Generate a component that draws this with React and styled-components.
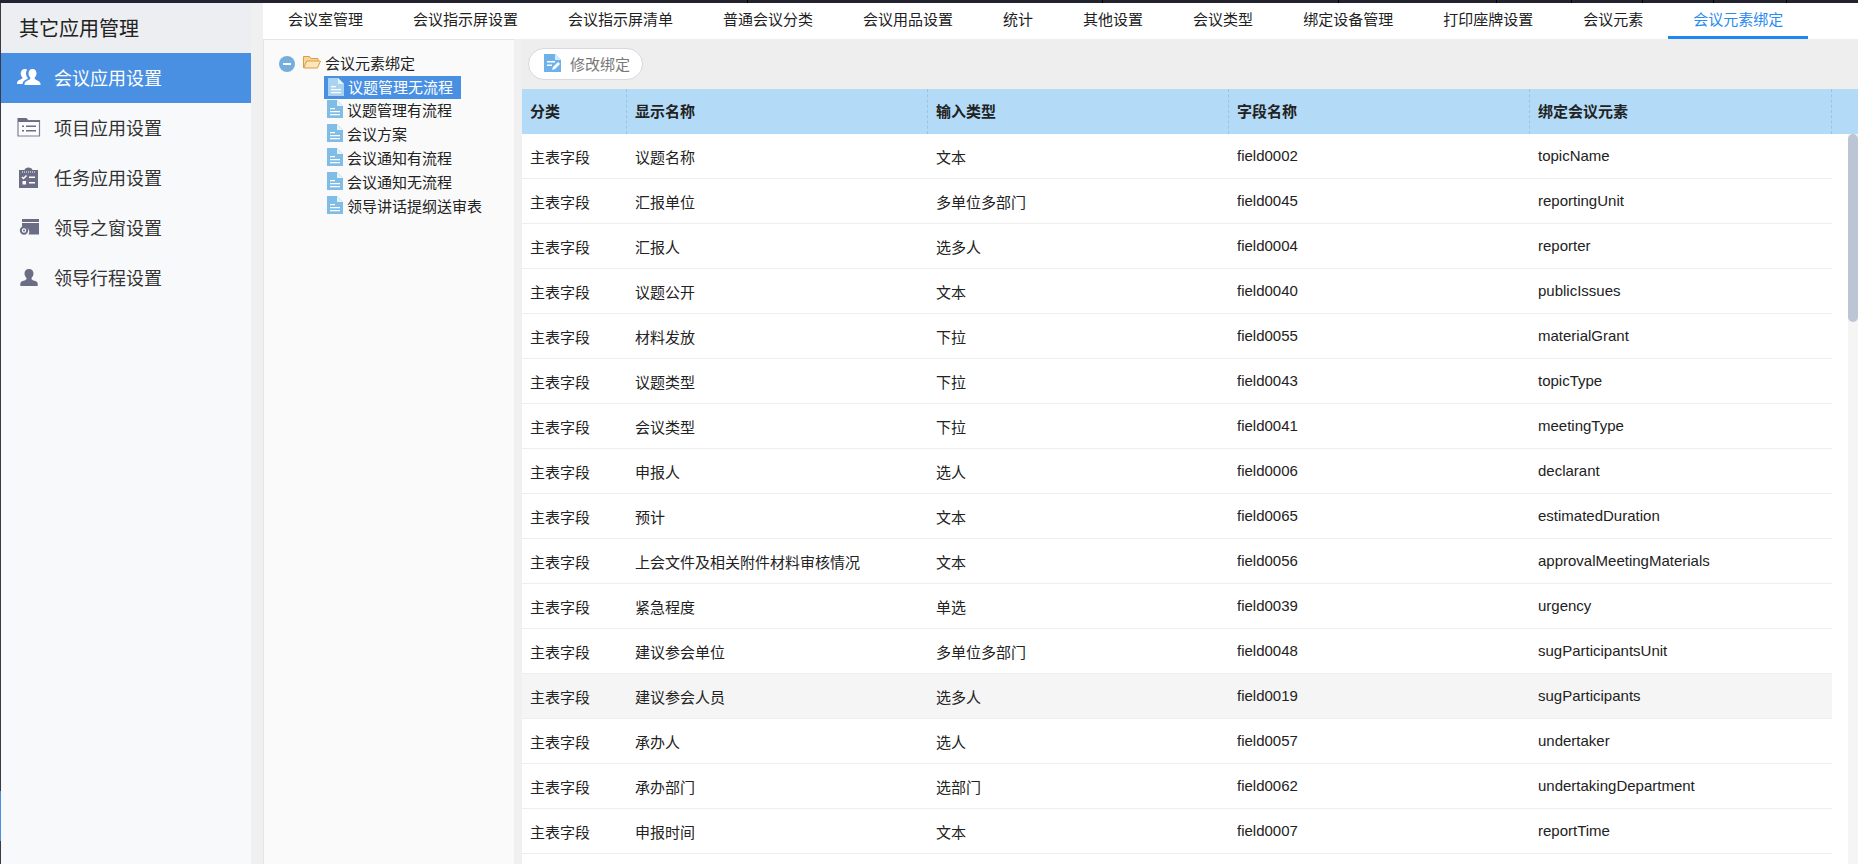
import React from 'react';
import styled, { createGlobalStyle } from 'styled-components';

const GlobalStyle = createGlobalStyle`
  html, body { margin: 0; padding: 0; height: 100%; overflow: hidden; }
  body {
    font-family: "Liberation Sans", "Noto Sans CJK SC", sans-serif;
    font-size: 15px;
    color: #222;
  }
  * { box-sizing: border-box; }
`;

const Page = styled.div`
  height: 100vh;
  display: flex;
  flex-direction: column;
  background: #f0f0f0;
  overflow: hidden;
`;

const TopStrip = styled.div`
  height: 3px;
  flex: none;
  display: flex;
  background: #23232f;
`;

const StripPart = styled.span`
  width: ${p => p.$w}px;
  border-right: 1px solid #000;
`;

const Body = styled.div`
  flex: 1;
  display: flex;
  min-height: 0;
`;

const LeftEdge = styled.div`
  width: 1px;
  flex: none;
  display: flex;
  flex-direction: column;
  background: #3a3a44;
`;

const EdgeMark = styled.span`
  height: 50px;
  margin-top: 788px;
  background: #4a90e2;
`;

const Sidebar = styled.aside`
  width: 250px;
  flex: none;
  margin-right: 12px;
  background: #f8f9fb;
`;

const SideTitle = styled.div`
  height: 50px;
  padding: 0 0 2px 18px;
  display: flex;
  align-items: center;
  font-size: 20px;
  color: #222;
  background: #eceef1;
`;

const SideItem = styled.div`
  height: 50px;
  padding-bottom: 2px;
  display: flex;
  align-items: center;
  font-size: 18px;
  color: ${p => (p.$active ? '#fff' : '#333')};
  background: ${p => (p.$active ? '#4a90e2' : 'transparent')};
`;

const SideIcon = styled.span`
  width: 53px;
  flex: none;
  display: flex;
  justify-content: center;
  padding-left: 2px;
  color: ${p => (p.$active ? '#fff' : '#6b6d84')};
`;

const Main = styled.div`
  flex: 1;
  min-width: 0;
  display: flex;
  flex-direction: column;
`;

const Tabs = styled.nav`
  height: 36px;
  flex: none;
  display: flex;
  background: #fff;
`;

const Tab = styled.div`
  height: 36px;
  padding: 0 25px 3px;
  display: flex;
  align-items: center;
  font-size: 15px;
  white-space: nowrap;
  color: ${p => (p.$active ? '#2a8cf0' : '#222')};
  border-bottom: 3px solid ${p => (p.$active ? '#1e88f0' : 'transparent')};
`;

const Work = styled.div`
  flex: 1;
  min-height: 0;
  display: flex;
`;

const TreePanel = styled.div`
  width: 251px;
  flex: none;
  padding: 11px 0 0 15px;
  background: #fafafa;
  border-left: 1px solid #e4e4e4;
  border-top: 1px solid #e6e6e6;
`;

const TreeRoot = styled.div`
  height: 24px;
  padding-bottom: 2px;
  display: flex;
  align-items: center;
  font-size: 15px;
`;

const TreeToggle = styled.span`
  width: 16px;
  height: 16px;
  margin: 3px 8px 0 0;
  border-radius: 50%;
  display: flex;
  align-items: center;
  justify-content: center;
  background: #74aedd;
  &::before {
    content: '';
    width: 8px;
    height: 2px;
    background: #fff;
  }
`;

const TreeList = styled.div`
  margin: 1px 0 0 45px;
`;

const TreeRow = styled.div`
  width: ${p => (p.$selected ? '137px' : 'auto')};
  height: ${p => (p.$selected ? '23px' : '24px')};
  display: flex;
  align-items: center;
  gap: 4px;
  padding-left: ${p => (p.$selected ? '4px' : '3px')};
  padding-bottom: 2px;
  margin-bottom: ${p => (p.$selected ? '-1px' : '0')};
  font-size: 15px;
  white-space: nowrap;
  color: ${p => (p.$selected ? '#fff' : '#222')};
  background: ${p => (p.$selected ? '#4a90e2' : 'transparent')};
`;

const Content = styled.div`
  flex: 1;
  min-width: 0;
  margin-left: 8px;
  display: flex;
  flex-direction: column;
`;

const Toolbar = styled.div`
  height: 50px;
  flex: none;
  padding: 9px 0 0 6px;
  background: #eee;
`;

const ToolButton = styled.button`
  width: 115px;
  height: 32px;
  padding: 0 0 2px 15px;
  display: flex;
  align-items: center;
  gap: 9px;
  font: inherit;
  color: #777;
  background: #fff;
  border: 1px solid #d8d8de;
  border-radius: 16px;
`;

const Grid = styled.div`
  display: grid;
  grid-template-columns: 105px 301px 301px 301px 302px;
`;

const HeadRow = styled(Grid)`
  height: 45px;
  flex: none;
  grid-template-columns: 105px 301px 301px 301px 302px 1fr;
  background: #b3dbf8;
`;

const HeadCell = styled.div`
  padding: 0 0 2px 8px;
  display: flex;
  align-items: center;
  font-weight: bold;
  border-right: 1px dashed #9cc3e2;
`;

const TableBody = styled.div`
  flex: 1;
  min-height: 0;
  display: flex;
  background: #fff;
`;

const Rows = styled.div`
  width: 1310px;
  flex: none;
  overflow: hidden;
`;

const Row = styled(Grid)`
  height: 45px;
  background: ${p => (p.$hover ? '#f5f5f5' : '#fff')};
  border-bottom: 1px solid #eee;
`;

const Cell = styled.div`
  padding: 0 0 ${p => (p.$latin ? '2px' : '0')} 8px;
  display: flex;
  align-items: center;
  white-space: nowrap;
  color: #222;
`;

const ScrollTrack = styled.div`
  width: 10px;
  margin-left: 16px;
  flex: none;
  background: #f5f5f5;
`;

const ScrollThumb = styled.div`
  height: 188px;
  border-radius: 5px;
  background: #bcc5d3;
`;

const PeopleIcon = () => (
  <svg width="24" height="18" viewBox="0 0 24 18" fill="currentColor">
    <path d="M15.5 1c2.6 0 4 2 4 4.300 0 1.700-.8 3.300-1.800 4.200v1.300c0 .7 2.300 1.400 4 2.400 1 .6 1.800 1.500 1.800 2.800v1H7.500v-1c0-1.300.8-2.200 1.800-2.800 1.700-1 4-1.700 4-2.400V9.500c-1-.9-1.800-2.500-1.800-4.200C11.500 3 12.900 1 15.500 1z" />
    <path d="M8 1c.9 0 1.700.3 2.300.7-.9 1-1.300 2.300-1.300 3.700 0 1.700.7 3.400 1.800 4.500v.8c-1 .6-2.300 1.100-3.300 1.800-1.100.8-1.900 2-2 3.500H0v-1c0-1.300.8-2.200 1.800-2.800 1.400-.8 3-1.400 3.600-2V9.400C4.400 8.500 3.700 7 3.700 5.300 3.700 3 5.400 1 8 1z" />
  </svg>
);

const ListIcon = () => (
  <svg width="24" height="20" viewBox="0 0 24 20">
    <path d="M1 1.500h8l2 2h11.500v15.500H1z" fill="#fdfdfe" stroke="#7d7f96" strokeWidth="1.200" />
    <path d="M1 1h8l2 2.500h12V5H1z" fill="#6b6d84" />
    <path d="M5 8.500h2v1.600H5zM5 13h2v1.600H5zM9 8.500h10v1.600H9zM9 13h10v1.600H9z" fill="#6b6d84" />
  </svg>
);

const ClipboardIcon = () => (
  <svg width="21" height="21" viewBox="0 0 21 21">
    <path d="M1 3h5.500c.4-1.500 1.900-2.500 4-2.500s3.600 1 4 2.500H20v18H1z" fill="#6b6d84" />
    <path d="M4 5h13" stroke="#fff" strokeWidth="1" strokeDasharray="1 1" />
    <path d="M4 10l1.500 1.500L8.500 8.500" fill="none" stroke="#fff" strokeWidth="1.500" />
    <path d="M11 9.500h6v1.600h-6zM11 15h6v1.600h-6zM4.500 14h3.500v3.500H4.500z" fill="#fff" />
  </svg>
);

const WindowIcon = () => (
  <svg width="20" height="16" viewBox="0 0 20 16">
    <path d="M3 0h17v3H3zM3 4h17v11.500H9.500A5 5 0 0 0 3 8.500z" fill="#6b6d84" />
    <circle cx="5" cy="11.500" r="3.200" fill="none" stroke="#6b6d84" strokeWidth="2" />
    <circle cx="5" cy="11.500" r="1" fill="#6b6d84" />
  </svg>
);

const PersonIcon = () => (
  <svg width="18" height="17" viewBox="0 0 18 17" fill="#6b6d84">
    <path d="M9 0c2.900 0 4.500 2 4.500 4.500 0 1.900-.9 3.500-2 4.400v1c0 .9 2.300 1.400 4 2.200 1.100.5 2.200 1.200 2.200 2.900V17H.3v-2c0-1.700 1.100-2.400 2.200-2.900 1.700-.8 4-1.300 4-2.200v-1c-1.100-.9-2-2.500-2-4.400C4.500 2 6.100 0 9 0z" />
  </svg>
);

const FolderIcon = () => (
  <svg width="18" height="14" viewBox="0 0 18 14" style={{ marginRight: 4 }}>
    <path d="M.5 13V1.500h6l1.500 2h7V6" fill="#f6d79c" stroke="#dd9c3f" />
    <path d="M.7 13l3-7h13.800l-3 7z" fill="#fbe6bd" stroke="#dd9c3f" />
  </svg>
);

const DocIcon = ({ light }) => (
  <svg width="16" height="18" viewBox="0 0 16 18">
    <path d="M0 0h10l6 6v12H0z" fill={light ? '#a9d3ee' : '#7fbce6'} />
    <path d="M10 0l6 6h-6z" fill="#e6f3fb" />
    <path d="M3 8h5v1.200H3zM3 11h10v1.200H3zM3 14h10v1.200H3z" fill="#fff" />
  </svg>
);

const EditIcon = () => (
  <svg width="17" height="18" viewBox="0 0 17 18">
    <path d="M0 0h11l6 6v12H0z" fill="#6db3ea" />
    <path d="M11 0l6 6h-6z" fill="#d6eafa" />
    <path d="M3 7h8v1.400H3zM3 10.500h5v1.400H3z" fill="#fff" />
    <path d="M8 16l1-3 5-5 2 2-5 5z" fill="#fff" />
  </svg>
);

const stripWidths = [748, 355, 236, 158, 75, 71, 71, 73];

const sideItems = [
  { label: '会议应用设置', icon: <PeopleIcon />, active: true },
  { label: '项目应用设置', icon: <ListIcon /> },
  { label: '任务应用设置', icon: <ClipboardIcon /> },
  { label: '领导之窗设置', icon: <WindowIcon /> },
  { label: '领导行程设置', icon: <PersonIcon /> },
];

const tabs = ['会议室管理', '会议指示屏设置', '会议指示屏清单', '普通会议分类', '会议用品设置', '统计', '其他设置', '会议类型', '绑定设备管理', '打印座牌设置', '会议元素', '会议元素绑定'];

const treeItems = ['议题管理无流程', '议题管理有流程', '会议方案', '会议通知有流程', '会议通知无流程', '领导讲话提纲送审表'];

const heads = ['分类', '显示名称', '输入类型', '字段名称', '绑定会议元素'];

const rows = [
  ['议题名称', '文本', 'field0002', 'topicName'],
  ['汇报单位', '多单位多部门', 'field0045', 'reportingUnit'],
  ['汇报人', '选多人', 'field0004', 'reporter'],
  ['议题公开', '文本', 'field0040', 'publicIssues'],
  ['材料发放', '下拉', 'field0055', 'materialGrant'],
  ['议题类型', '下拉', 'field0043', 'topicType'],
  ['会议类型', '下拉', 'field0041', 'meetingType'],
  ['申报人', '选人', 'field0006', 'declarant'],
  ['预计', '文本', 'field0065', 'estimatedDuration'],
  ['上会文件及相关附件材料审核情况', '文本', 'field0056', 'approvalMeetingMaterials'],
  ['紧急程度', '单选', 'field0039', 'urgency'],
  ['建议参会单位', '多单位多部门', 'field0048', 'sugParticipantsUnit'],
  ['建议参会人员', '选多人', 'field0019', 'sugParticipants'],
  ['承办人', '选人', 'field0057', 'undertaker'],
  ['承办部门', '选部门', 'field0062', 'undertakingDepartment'],
  ['申报时间', '文本', 'field0007', 'reportTime'],
];

export default function App() {
  return (
    <Page>
      <GlobalStyle />
      <TopStrip>
        {stripWidths.map((w, i) => <StripPart key={i} $w={w} />)}
      </TopStrip>
      <Body>
        <LeftEdge><EdgeMark /></LeftEdge>
        <Sidebar>
          <SideTitle>其它应用管理</SideTitle>
          {sideItems.map(item => (
            <SideItem key={item.label} $active={item.active}>
              <SideIcon $active={item.active}>{item.icon}</SideIcon>
              {item.label}
            </SideItem>
          ))}
        </Sidebar>
        <Main>
          <Tabs>
            {tabs.map((t, i) => <Tab key={t} $active={i === tabs.length - 1}>{t}</Tab>)}
          </Tabs>
          <Work>
            <TreePanel>
              <TreeRoot>
                <TreeToggle />
                <FolderIcon />
                会议元素绑定
              </TreeRoot>
              <TreeList>
                {treeItems.map((t, i) => (
                  <TreeRow key={t} $selected={i === 0}>
                    <DocIcon light={i === 0} />
                    {t}
                  </TreeRow>
                ))}
              </TreeList>
            </TreePanel>
            <Content>
              <Toolbar>
                <ToolButton><EditIcon />修改绑定</ToolButton>
              </Toolbar>
              <HeadRow>
                {heads.map(h => <HeadCell key={h}>{h}</HeadCell>)}
              </HeadRow>
              <TableBody>
                <Rows>
                  {rows.map(r => (
                    <Row key={r[2]} $hover={r[2] === 'field0019'}>
                      <Cell>主表字段</Cell>
                      {r.map((c, i) => <Cell key={c} $latin={i > 1}>{c}</Cell>)}
                    </Row>
                  ))}
                </Rows>
                <ScrollTrack><ScrollThumb /></ScrollTrack>
              </TableBody>
            </Content>
          </Work>
        </Main>
      </Body>
    </Page>
  );
}
